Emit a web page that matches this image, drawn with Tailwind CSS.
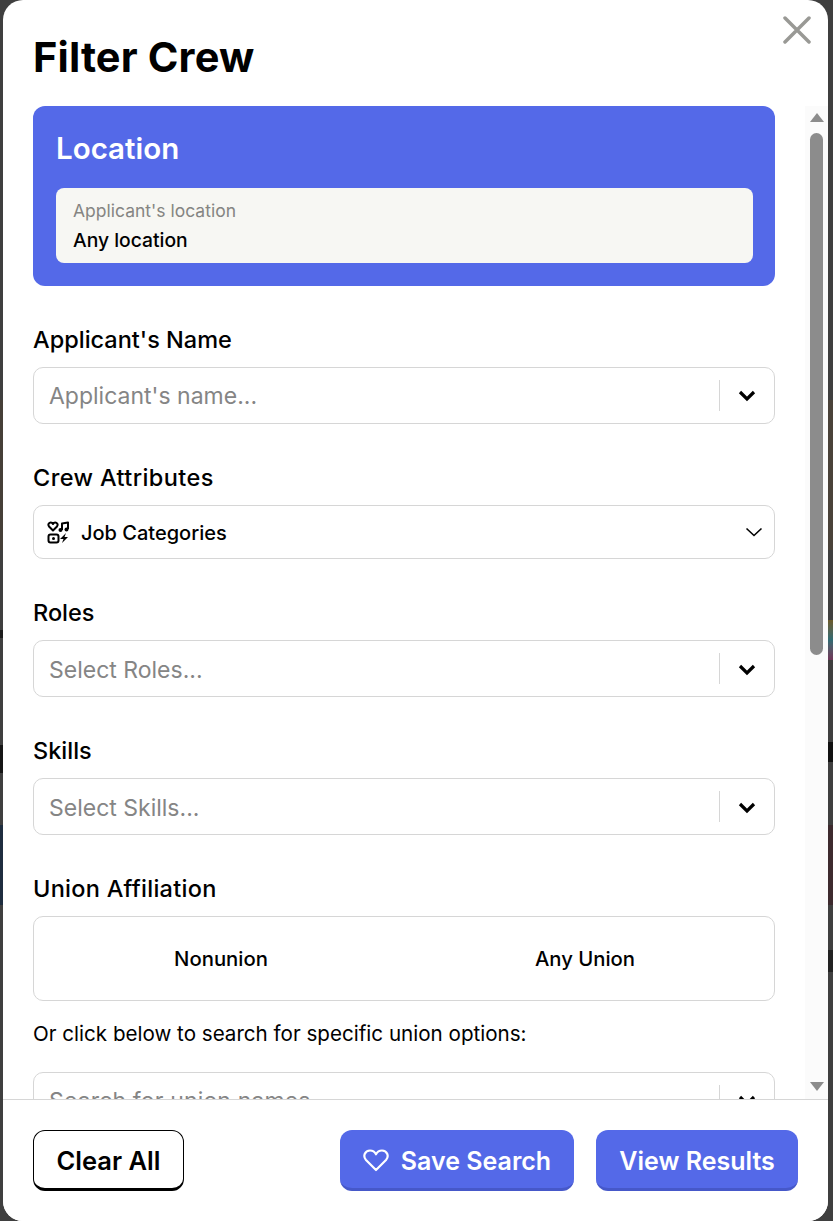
<!DOCTYPE html>
<html lang="en">
<head>
    <meta charset="UTF-8">
    <title>Filter Crew</title>
    <script src="https://cdn.jsdelivr.net/npm/@tailwindcss/browser@4"></script>
</head>
<body class="relative bg-[#3f3f3f] h-[1221px] overflow-hidden font-['Inter',sans-serif] text-black">
    <!-- page behind the modal, only its edges show -->
    <div class="absolute left-0 top-[400px] w-[3px] h-[150px] bg-[#463f38]"></div>
    <div class="absolute left-0 top-[825px] w-[3px] h-[80px] bg-[#1f2d3f]"></div>
    <div class="absolute left-0 top-[630px] w-[3px] h-[8px] bg-[#1c1c1c]"></div>
    <div class="absolute left-0 top-[745px] w-[3px] h-[28px] bg-[#161616]"></div>
    <div class="absolute right-0 top-[400px] w-[5px] h-[150px] bg-[#4a4239]"></div>
    <div class="absolute right-0 top-[620px] w-[5px] h-[40px] bg-gradient-to-b from-[#6b5a2a] via-[#2f6a72] to-[#6e3558]"></div>
    <div class="absolute right-0 top-[742px] w-[5px] h-[20px] bg-[#111111]"></div>
    <div class="absolute right-0 top-[825px] w-[5px] h-[80px] bg-[#3d2a2e]"></div>
    <div class="absolute right-0 top-[950px] w-[5px] h-[22px] bg-[#222222]"></div>

    <div class="relative ml-[3px] w-[825px] h-[1221px] bg-white rounded-[20px] flex flex-col overflow-hidden">
        <button class="absolute top-[16px] right-[17px] text-[#999995]">
            <svg width="28" height="28" viewBox="0 0 28 28" fill="none" stroke="currentColor" stroke-width="3.5" stroke-linecap="round"><path d="M2 2l24 24M26 2L2 26"/></svg>
        </button>
        <h1 class="h-[106px] pl-[30px] pt-[33px] text-[41.500px] leading-[48px] font-bold tracking-[0.15px]">Filter Crew</h1>

        <div class="flex h-[993px] overflow-hidden">
            <div class="w-[802px] pl-[30px] pr-[30px] overflow-hidden">
                <section class="bg-[#5469e8] rounded-[12px] h-[180px] pl-[23px] pr-[22px] pt-[24px]">
                    <h2 class="text-white text-[29.500px] leading-[36px] font-semibold">Location</h2>
                    <div class="mt-[22px] h-[75px] bg-[#f7f7f3] rounded-[8px] px-[17px] pt-[13px]">
                        <p class="text-[17.500px] leading-[20px] text-[#858582]">Applicant's location</p>
                        <p class="mt-[9px] text-[19.300px] leading-[20px] font-medium">Any location</p>
                    </div>
                </section>

                <h3 class="mt-[40px] text-[23.500px] leading-[28px] font-medium">Applicant's Name</h3>
                <div class="mt-[13px] h-[57px] border border-[#d6d6d6] rounded-[10px] flex items-center pl-[15px]">
                    <span class="flex-1 pt-[1px] text-[23px] text-[#858585]">Applicant's name...</span>
                    <span class="w-[1px] h-[31px] bg-[#d6d6d6]"></span>
                    <svg class="mx-[18px]" width="18" height="12" viewBox="0 0 18 12" fill="none" stroke="black" stroke-width="3.2"><path d="M2 2l7 7 7-7"/></svg>
                </div>

                <h3 class="mt-[40px] text-[23.500px] leading-[28px] font-medium tracking-[0.4px]">Crew Attributes</h3>
                <div class="mt-[13px] h-[54px] border border-[#d6d6d6] rounded-[10px] flex items-center pl-[13px] pr-[11px]">
                    <svg width="23" height="23" viewBox="0 0 23 23" fill="none" stroke="black" stroke-width="2" stroke-linejoin="round">
                        <path d="M6 9.500L2 5.500C0.500 3.500 2 1.500 3.800 1.500 5 1.500 5.600 2.200 6 3 6.400 2.200 7 1.500 8.200 1.500 10 1.500 11.500 3.500 10 5.500z"/>
                        <path d="M15 9V2.500l6-1V8"/>
                        <circle cx="13.500" cy="9" r="2" fill="black" stroke="none"/>
                        <circle cx="19.500" cy="8.500" r="2" fill="black" stroke="none"/>
                        <rect x="1.500" y="13.500" width="10" height="8" rx="2"/>
                        <circle cx="6.500" cy="17.500" r="1.500" fill="black" stroke="none"/>
                        <path d="M19 12l-6 6h3.500l-1.500 4 6-6h-3.500z" fill="black" stroke="none"/>
                    </svg>
                    <span class="ml-[11px] flex-1 pt-[1px] text-[20px] font-medium">Job Categories</span>
                    <svg width="18" height="10" viewBox="0 0 18 10" fill="none" stroke="black" stroke-width="1.6"><path d="M1.500 1.500L9 8.500l7.500-7"/></svg>
                </div>

                <h3 class="mt-[40px] text-[23.500px] leading-[28px] font-medium">Roles</h3>
                <div class="mt-[13px] h-[57px] border border-[#d6d6d6] rounded-[10px] flex items-center pl-[15px]">
                    <span class="flex-1 pt-[3px] text-[23px] text-[#858585]">Select Roles...</span>
                    <span class="w-[1px] h-[31px] bg-[#d6d6d6]"></span>
                    <svg class="mx-[18px] mt-[2px]" width="18" height="12" viewBox="0 0 18 12" fill="none" stroke="black" stroke-width="3.2"><path d="M2 2l7 7 7-7"/></svg>
                </div>

                <h3 class="mt-[40px] text-[23.500px] leading-[28px] font-medium">Skills</h3>
                <div class="mt-[13px] h-[57px] border border-[#d6d6d6] rounded-[10px] flex items-center pl-[15px]">
                    <span class="flex-1 pt-[3px] text-[23px] text-[#858585]">Select Skills...</span>
                    <span class="w-[1px] h-[31px] bg-[#d6d6d6]"></span>
                    <svg class="mx-[18px] mt-[2px]" width="18" height="12" viewBox="0 0 18 12" fill="none" stroke="black" stroke-width="3.2"><path d="M2 2l7 7 7-7"/></svg>
                </div>

                <h3 class="mt-[40px] text-[23.500px] leading-[28px] font-medium tracking-[0.27px]">Union Affiliation</h3>
                <div class="mt-[13px] h-[85px] border border-[#d6d6d6] rounded-[10px] flex items-center pl-[5px] pr-[7px]">
                    <span class="flex-1 pt-[2px] text-center text-[20.300px] font-medium">Nonunion</span>
                    <span class="flex-1 pt-[2px] text-center text-[20.300px] font-medium">Any Union</span>
                </div>
                <p class="mt-[20px] text-[20.600px] leading-[26px]">Or click below to search for specific union options:</p>
                <div class="mt-[25px] h-[57px] border border-[#d6d6d6] rounded-[10px] flex items-center pl-[15px]">
                    <span class="flex-1 pt-[1px] text-[23px] text-[#858585] tracking-[0.15px]">Search for union names...</span>
                    <span class="w-[1px] h-[31px] bg-[#d6d6d6]"></span>
                    <svg class="mx-[18px]" width="18" height="12" viewBox="0 0 18 12" fill="none" stroke="black" stroke-width="3.2"><path d="M2 2l7 7 7-7"/></svg>
                </div>
            </div>
            <div class="w-[23px] bg-[#fbfbfb] flex flex-col items-center">
                <span class="mt-[7px] w-0 h-0 border-x-[7.500px] border-x-transparent border-b-[9px] border-b-[#8c8c8c]"></span>
                <span class="mt-[11px] w-[13px] h-[522px] bg-[#8c8c8c] rounded-full"></span>
                <span class="mt-[427px] w-0 h-0 border-x-[7.500px] border-x-transparent border-t-[9px] border-t-[#8c8c8c]"></span>
            </div>
        </div>

        <footer class="h-[122px] border-t border-[#d6d6d6] flex items-start pl-[30px] pr-[30px] pt-[30px] bg-white">
            <button class="w-[151px] h-[61px] pt-[4px] border border-black border-b-[3px] rounded-[12px] text-[25.500px] font-semibold">Clear All</button>
            <button class="ml-auto w-[234px] h-[61px] pt-[5px] bg-[#5469e8] border-b-[3px] border-[#4658c9] rounded-[12px] text-white text-[25px] font-semibold flex items-center justify-center gap-[12px]">
                <svg class="-mt-[2px]" width="26" height="23" viewBox="0 0 26 23" fill="none" stroke="white" stroke-width="2.2" stroke-linejoin="round"><path d="M13 21L3 11C-0.500 7 2 1.500 7 1.500c3 0 5 1.800 6 3.800 1-2 3-3.800 6-3.800 5 0 7.500 5.500 4 9.500z"/></svg>
                Save Search
            </button>
            <button class="ml-[22px] w-[202px] h-[61px] pt-[5px] bg-[#5469e8] border-b-[3px] border-[#4658c9] rounded-[12px] text-white text-[25px] font-semibold">View Results</button>
        </footer>
    </div>
</body>
</html>
